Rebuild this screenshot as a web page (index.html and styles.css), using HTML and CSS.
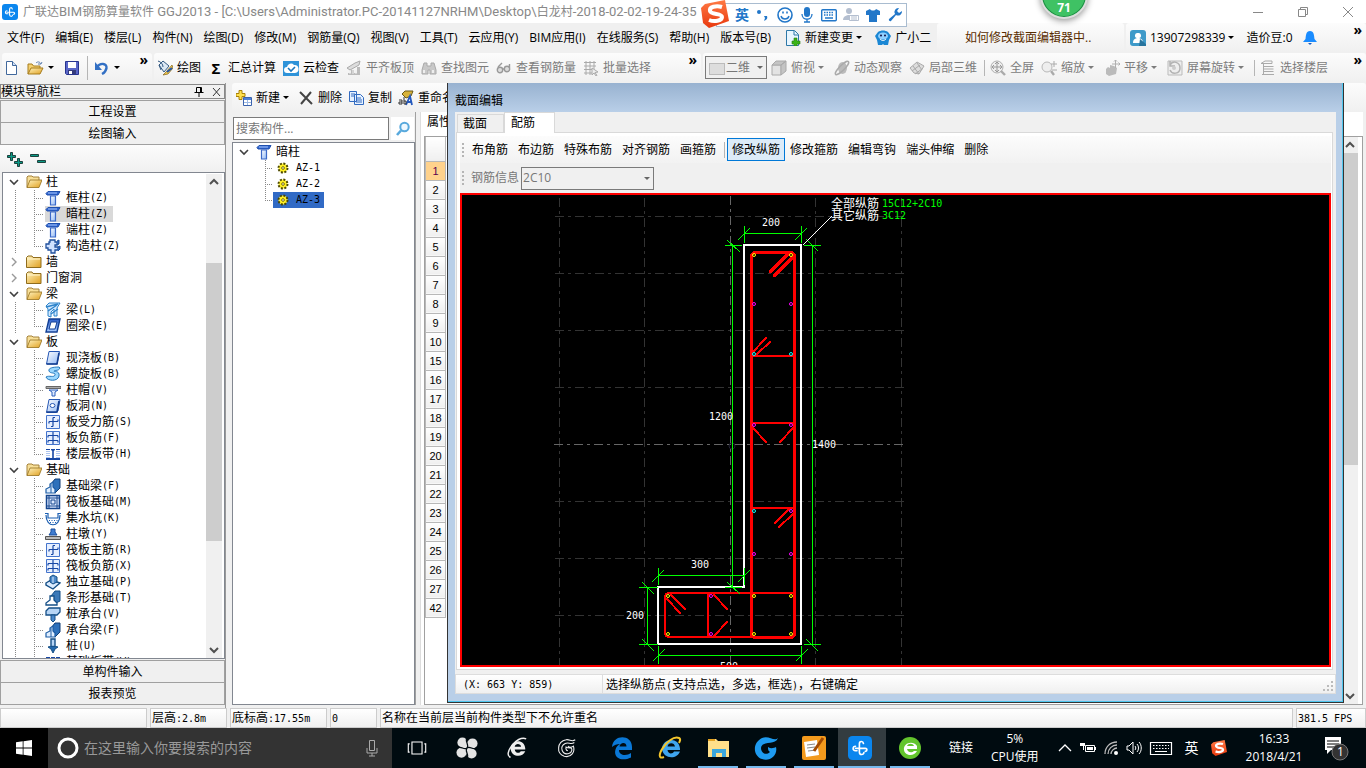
FILE: index.html
```html
<!DOCTYPE html>
<html lang="zh-CN">
<head>
<meta charset="utf-8">
<title>广联达BIM钢筋算量软件 GGJ2013</title>
<link rel="stylesheet" href="styles.css">
</head>
<body>
<svg class="defs" aria-hidden="true">
<defs>
<linearGradient id="gy" x1="0" y1="0" x2="1" y2="1"><stop offset="0" stop-color="#fff3bf"/><stop offset="1" stop-color="#e0a020"/></linearGradient>
<linearGradient id="gb" x1="0" y1="0" x2="1" y2="1"><stop offset="0" stop-color="#fff"/><stop offset="1" stop-color="#8fb8f5"/></linearGradient>
<linearGradient id="gd" x1="0" y1="0" x2="0" y2="1"><stop offset="0" stop-color="#2a5cc8"/><stop offset="1" stop-color="#a9ccff"/></linearGradient>
<linearGradient id="gs" x1="0" y1="0" x2="0" y2="1"><stop offset="0" stop-color="#ff7a45"/><stop offset="1" stop-color="#e8380d"/></linearGradient>
<symbol id="app" viewBox="0 0 16 16"><rect width="16" height="16" rx="3" fill="#0a86ee"/><path d="M10.300 5C10 3.200 7.600 3.200 7.600 5.200V10.800C7.600 12.800 10.400 12.800 10.600 11M5 8.200H11.500C13 8.200 13 10.200 11.500 10.200M5 6.800C3 6.800 2.800 9.800 5 9.800H6" fill="none" stroke="#fff" stroke-width="1.100" stroke-linecap="round"/></symbol>
<symbol id="newdoc" viewBox="0 0 16 16"><path d="M2.500 1.500h6l4 4v9h-10z" fill="#fff" stroke="#41689c"/><path d="M8.500 1.500v4h4" fill="#cfe0f7" stroke="#41689c"/></symbol>
<symbol id="open" viewBox="0 0 18 16"><path d="M1 14V4h4l1.500 2H13v2" fill="#f4d070" stroke="#a67c1d"/><path d="M1 14 4 8h12l-3 6z" fill="url(#gy)" stroke="#a67c1d"/><path d="M9 3c2-2 4-1 5 1l1-2M14 4h-3" fill="none" stroke="#5c7fb0"/></symbol>
<symbol id="save" viewBox="0 0 16 16"><path d="M1.500 1.500h13v13h-12l-1-1z" fill="#5a66c8" stroke="#27348f"/><path d="M4 2h8v6H4z" fill="#fff"/><path d="M4 10h8v4H4z" fill="#353c7c"/><path d="M5 11h3v3H5z" fill="#fff"/></symbol>
<symbol id="undo" viewBox="0 0 16 16"><path d="M3 7c3-4.500 10-4 9.500 1C12 11 10 13 8 14" fill="none" stroke="#3370c4" stroke-width="2.400"/><path d="M1 2v8h7z" fill="#3370c4"/></symbol>
<symbol id="paint" viewBox="0 0 16 16"><path d="M2 5 6 1l6 5-5 6z" fill="#dde9f5" stroke="#345a82"/><path d="M1 1c3 1 5 3 5 6M2 5l2 5" fill="none" stroke="#345a82"/><path d="M15 5 9 12l-3 3 5-1 5-6z" fill="#f3c94b" stroke="#7f611b" stroke-width=".7"/><path d="m10 12 5-4" stroke="#2757a5" stroke-width="2"/></symbol>
<symbol id="cloudchk" viewBox="0 0 16 16"><rect y="1" width="16" height="15" fill="#2e93d9"/><path d="M4 13a3 3 0 0 1 0-6 4 4 0 0 1 7-2 3.500 3.500 0 0 1 1 8z" fill="#fff"/><path d="m5 8 3 3 4-4" fill="none" stroke="#1b77bd" stroke-width="1.600"/></symbol>
<symbol id="align" viewBox="0 0 16 16"><path d="M1 8 9 3l5-2-1 4-9 5z" fill="#ddd" stroke="#aaa"/><path d="M2 13h3v-3h3v3h3V7h3v8H2z" fill="#bbb"/><path d="M4 11v3M7 10v4M10 10v4" stroke="#eee"/></symbol>
<symbol id="binoc" viewBox="0 0 16 16"><path d="M3 3h3v3h4V3h3l2 7v4H9v-4H7v4H1v-4z" fill="#c8c8c8" stroke="#aaa"/><path d="M3 10v3M12 10v3" stroke="#eee" stroke-width="2"/></symbol>
<symbol id="glasses" viewBox="0 0 16 16"><g fill="#ddd" stroke="#999" stroke-width="1.400"><circle cx="4" cy="10" r="2.700"/><circle cx="11" cy="9" r="2.700"/><path d="M6.500 9h2M2 7l4-4M13.500 8V4" fill="none"/></g></symbol>
<symbol id="batch" viewBox="0 0 16 16"><path d="M1 2.500h12M1 6h12M1 9.500h8M1 13h8M3 1v14M7 1v14M11 1v8" stroke="#aaa" fill="none"/><path d="m9 8 6 4-3 .5 2 3-1 .5-2-3-2 2z" fill="#eee" stroke="#aaa"/></symbol>
<symbol id="cube" viewBox="0 0 16 16"><path d="M1 5h9v10H1z" fill="#e3e3e3" stroke="#aaa"/><path d="m1 5 4-4h10l-5 4zM10 15V5l5-4v10z" fill="#c4c4c4" stroke="#aaa"/></symbol>
<symbol id="orbit" viewBox="0 0 16 16"><ellipse cx="8.500" cy="8" rx="4.500" ry="6" fill="#bbb"/><ellipse cx="8" cy="8" rx="9" ry="2.500" transform="rotate(-45 8 8)" fill="none" stroke="#aaa" stroke-width="1.500"/></symbol>
<symbol id="loc3d" viewBox="0 0 16 16"><path d="m1 8 7-6 7 4-5 8-5-1z" fill="#ddd" stroke="#aaa"/><path d="m4 6 6 8M8 3l5 7M3 11l8-6M6 14l7-5" stroke="#aaa"/></symbol>
<symbol id="full" viewBox="0 0 16 16"><circle cx="7" cy="7" r="6" fill="#eee" stroke="#b0b0b0"/><path d="M7 2v10M2 7h10M5 4l2-2 2 2M5 10l2 2 2-2M4 5 2 7l2 2M10 5l2 2-2 2" fill="none" stroke="#999"/><path d="m11 11 4 4" stroke="#aaa" stroke-width="2.400"/></symbol>
<symbol id="zoomi" viewBox="0 0 16 16"><circle cx="6" cy="7" r="5" fill="#eee" stroke="#b8b8b8"/><path d="m10 11 3 4" stroke="#aaa" stroke-width="2.400"/><path d="M13 1v6M10 4h6M11 10h5" stroke="#aaa"/></symbol>
<symbol id="pan" viewBox="0 0 16 16"><path d="m2 9 2-2 2 1V5l4 1 3 2-1 6-7 2-3-2z" fill="#bbb"/><path d="M11.500 0v8M8 4h8M10 1.500 11.500 0 13 1.500M14.500 2.500 16 4l-1.500 1.500" stroke="#b0b0b0" fill="none"/></symbol>
<symbol id="rot" viewBox="0 0 16 16"><path d="M1 1h14v14H1z" fill="#eee" stroke="#bbb"/><path d="M3 5c3-5 10-3 10 3s-8 7-10 2M3 1v5h5" fill="none" stroke="#b3b3b3" stroke-width="1.500"/><circle cx="7" cy="8" r="2" fill="#ccc"/></symbol>
<symbol id="floors" viewBox="0 0 16 16"><path d="M1 3.500 5 1h7v2.500zM3.500 6.500h10M3.500 9h10M3.500 11.500h10M2 14.500h12M3.500 4v10" fill="none" stroke="#aaa"/></symbol>
<symbol id="addcmp" viewBox="0 0 16 16"><path d="M3 .5h3v3h3v3H6v3H3v-3H0v-3h3z" fill="#ffe04d" stroke="#a98208"/><path d="M7.500 7.500h8v8h-8z" fill="#fff" stroke="#3b63ad"/><path d="M8 8h7v2H8z" fill="#4d80d8"/><path d="M8 12.500h7M11.500 10v5" stroke="#9cb9e6"/></symbol>
<symbol id="del" viewBox="0 0 16 16"><path d="m2 2 12 12M13 2 3 14" stroke="#444" stroke-width="2" fill="none"/></symbol>
<symbol id="copy" viewBox="0 0 16 16"><path d="M1.500 1.500h7v10h-7zM6.500 4.500h6l3 3v7h-9z" fill="#e6f1ff" stroke="#326bc0"/><path d="M3 4h4M3 6h3M8 8h5M8 10h6M8 12h6" stroke="#326bc0"/></symbol>
<symbol id="ren" viewBox="0 0 16 16"><path d="M4 4 7 1h8l-2 5-5 2z" fill="#d8b33a" stroke="#6b5a18"/><path d="m8 15 4-9 2 9M9 12h4" stroke="#2559bd" stroke-width="1.800" fill="none"/><path d="M1 10h3v4H1v-2h3M6 7v7h2v-3H6" stroke="#333" fill="none"/></symbol>
<symbol id="srch" viewBox="0 0 16 16"><circle cx="9.500" cy="6" r="4.200" fill="#eef8ff" stroke="#58a9dd" stroke-width="2"/><path d="M6 9.500 2 14" stroke="#58a9dd" stroke-width="2.600"/></symbol>
<symbol id="gear" viewBox="0 0 12 12"><circle cx="6" cy="6" r="4.500" fill="#fff12e" stroke="#4c4800" stroke-width="2" stroke-dasharray="2 1.500"/><circle cx="6" cy="6" r="3" fill="#ffee20"/><path d="M4 6h4M6 4v4" stroke="#4c4800"/><circle cx="6" cy="6" r=".8" fill="#fff"/></symbol>
<symbol id="fopen" viewBox="0 0 16 16"><path d="M1 13.500V3l1-1h4l1 1h6v4" fill="#f7df98" stroke="#a5823b"/><path d="M1 13.500 4 6h12l-3 7.500z" fill="url(#gy)" stroke="#96701c" stroke-width=".8"/></symbol>
<symbol id="fclose" viewBox="0 0 16 16"><path d="M.5 3.500 2 2h4l1 1.500h8v10H.5z" fill="url(#gy)" stroke="#8f6c1d"/><path d="M1 5h13" stroke="#fff6d0"/></symbol>
<symbol id="col" viewBox="0 0 16 16"><path d="M1 3.500 3 1.500h12L13 5H2z" fill="#2e63cc" stroke="#1e4fae"/><path d="M3 3h9" stroke="#a8c8ff"/><path d="M5.500 6h5v9h-5z" fill="url(#gb)" stroke="#3b69c8" stroke-width="1.200"/></symbol>
<symbol id="gz" viewBox="0 0 16 16"><path d="M5 2h5v2h2v3h-2v2h3v3h-3v3H6v-3H3v-2H1V6h3V4h1z" fill="#cfe1ff" stroke="#1f4f9c" stroke-width="1.300"/><path d="m12 3 2-1v4l-2 1M13 9l2-1v3l-2 2" fill="#2e66bd" stroke="#1f4f9c"/></symbol>
<symbol id="beam" viewBox="0 0 16 16"><path d="m1 4 3-3h11l-3 5v8H9V7l-3 3v5l-3-1V7z" fill="#cfe8ff" stroke="#2d83ca"/><path d="m1 5 12-3M3 9l9-6M6 12l7-5" fill="none" stroke="#2d83ca" stroke-width="1.300"/></symbol>
<symbol id="ring" viewBox="0 0 16 16"><path d="M4 1h11l-3 13H1z" fill="url(#gd)" stroke="#123f94" stroke-width="1.400"/><path d="M6 4h6l-2 7H4z" fill="#fff" stroke="#123f94"/></symbol>
<symbol id="slab" viewBox="0 0 16 16"><path d="M4 1.500h10.500L12 14H1.500z" fill="url(#gb)" stroke="#2556b3"/><path d="M1.500 14H12l2-11" fill="none" stroke="#153f91" stroke-width="1.600"/></symbol>
<symbol id="spiral" viewBox="0 0 16 16"><path d="M14 1C8 1 3 2 4 5s7 1 6 4-6 0-9 2c1 4 12 5 13-1S8 6 9 5s5 0 6-3z" fill="#9bd8ff" stroke="#2679bd"/></symbol>
<symbol id="cap" viewBox="0 0 16 16"><path d="M1 4.500h15v2H1z" fill="#aaa" stroke="#666"/><path d="M4 8h9l-3 2v4H7v-4z" fill="#ddeaff" stroke="#2a5ebc"/></symbol>
<symbol id="hole" viewBox="0 0 16 16"><path d="M4 1.500h11L13 13l-2 1.500H1.500z" fill="url(#gb)" stroke="#2556b3"/><path d="M1.500 14H12l2-11" fill="none" stroke="#153f91" stroke-width="1.600"/><ellipse cx="7.500" cy="7.500" rx="2.500" ry="2" fill="#fff" stroke="#2556b3"/></symbol>
<symbol id="rb1" viewBox="0 0 16 16"><path d="M1.500 1.500h13v13h-13z" fill="#e6efff" stroke="#4474cc"/><path d="M8 12.500V3.500M4 7.500h9M8 3.500h2M8 12.500H6M4 7.500v2M13 7.500v-2" fill="none" stroke="#1747a5" stroke-width="1.200"/></symbol>
<symbol id="rb2" viewBox="0 0 16 16"><path d="M1.500 1.500h13v13h-13z" fill="#e6efff" stroke="#4474cc"/><path d="M8 2v12M3 5.500h10M3 10.500h10M3 5.500v2M13 5.500v2M3 10.500v2M13 10.500v2" fill="none" stroke="#1747a5" stroke-width="1.200"/></symbol>
<symbol id="strip" viewBox="0 0 16 16"><path d="M1 13h14" stroke="#1747a5" stroke-width="2"/><path d="M1 3.500h14" stroke="#1747a5" stroke-dasharray="4 1"/><path d="M6.500 4h3M8 3v10" stroke="#1747a5" stroke-width="1.600"/><path d="M4 5v7M12 5v7M2 5v7M14 5v7" stroke="#5d8be0" stroke-dasharray="1 1"/></symbol>
<symbol id="fb" viewBox="0 0 16 16"><path d="m6 6 4-5h5v9l-5 5z" fill="#2e71bb" stroke="#123f76"/><path d="M1 15v-4l4-2V6l3-2v5l2 2v4z" fill="#e1efff" stroke="#1d5da5" stroke-width="1.200"/><path d="M6 6v9" stroke="#1d5da5"/></symbol>
<symbol id="raft" viewBox="0 0 16 16"><path d="M1.500 1.500h13v13h-13z" fill="#dce9ff" stroke="#16468e" stroke-width="1.500"/><path d="M4 1v14M12 1v14M1 4h14M1 12h14M6 6h4v4H6z" fill="none" stroke="#16468e"/></symbol>
<symbol id="pit" viewBox="0 0 16 16"><path d="M0 3.500h3V8h10V3.500h3M1 5c0 13 14 13 14 0" fill="none" stroke="#1b5eb1" stroke-width="1.200"/><path d="M4 10.500h9M5 12.500h6" stroke="#1b5eb1" stroke-dasharray="1 1.500"/></symbol>
<symbol id="pier" viewBox="0 0 16 16"><path d="M4 9 6 6V3h4v3l2 3z" fill="#3f7dd1" stroke="#1b4f9c"/><path d="M.5 10.500h15v3H.5z" fill="#bbb" stroke="#555"/></symbol>
<symbol id="ind" viewBox="0 0 16 16"><path d="m1 9 5-3 9 3-7 6-7-4z" fill="#dcecff" stroke="#154f87" stroke-width="1.400"/><path d="M5 8V3l3-2 4 2v5l-4 2z" fill="#4d8acb" stroke="#154f87"/><path d="M8 3v6" stroke="#dcecff"/></symbol>
<symbol id="stp" viewBox="0 0 16 16"><path d="m6 6 4-5h5v10l-4 2" fill="#3b79b8" stroke="#154f87"/><path d="M1 15v-2l4-3V6h4v4l3 3v2z" fill="#fff" stroke="#154f87" stroke-width="1.300"/></symbol>
<symbol id="pcap" viewBox="0 0 16 16"><path d="m1 5 3-3h11v4l-3 3H1z" fill="#b7d5f5" stroke="#154f87" stroke-width="1.300"/><path d="M6 9h4v5l-2 2-2-2z" fill="#4d8acb" stroke="#154f87"/></symbol>
<symbol id="pile" viewBox="0 0 16 16"><path d="M6 1h4v8H6z" fill="#b7d5f5" stroke="#154f87" stroke-width="1.400"/><path d="M3 9c3-1 7-1 10 0l-3 2-2 4-2-4z" fill="#2268ad" stroke="#154f87"/></symbol>
<symbol id="chev" viewBox="0 0 16 16"><path d="m4 6 4 4 4-4" fill="none" stroke="#404040" stroke-width="1.600"/></symbol>
<symbol id="chevr" viewBox="0 0 16 16"><path d="m6 4 4 4-4 4" fill="none" stroke="#999" stroke-width="1.400"/></symbol>
<symbol id="chevu" viewBox="0 0 16 16"><path d="m4 10 4-4 4 4" fill="none" stroke="#505050" stroke-width="2"/></symbol>
<symbol id="sg" viewBox="0 0 28 28"><path d="M4 4 24 0l4 21-20 7-6-5L0 8z" fill="url(#gs)"/><path d="M21 7c-6-2-13 0-12 4s12 2 12 6-8 5-13 3" fill="none" stroke="#fff" stroke-width="4"/></symbol>
<symbol id="shirt" viewBox="0 0 16 16"><path d="m5 2-4 2v4h3v7h8V8h3V4l-4-2c-1 2-5 2-6 0z" fill="#2277c9"/></symbol>
<symbol id="wrench" viewBox="0 0 16 16"><path d="M15 4a4 4 0 0 1-6 4l-5 6a1.500 1.500 0 0 1-2-2l6-5a4 4 0 0 1 4-6l-2 3 2 2z" fill="#2277c9"/></symbol>
<symbol id="smile" viewBox="0 0 16 16"><circle cx="8" cy="8" r="7" fill="none" stroke="#2277c9" stroke-width="1.600"/><path d="M4 9c1 4 7 4 8 0" fill="none" stroke="#2277c9" stroke-width="1.400"/><path d="M6 4.500v2M10 4.500v2" stroke="#2277c9" stroke-width="1.600"/></symbol>
<symbol id="mic" viewBox="0 0 16 16"><rect x="5" width="6" height="10" rx="3" fill="#2277c9"/><path d="M3 7c0 7 10 7 10 0M8 12v3M5 15h6" fill="none" stroke="#2277c9" stroke-width="1.300"/></symbol>
<symbol id="kb" viewBox="0 0 16 16"><rect x=".7" y="2.700" width="14.600" height="11" rx="1" fill="none" stroke="#2277c9" stroke-width="1.400"/><path d="M3 5.500h10M3 8h10" stroke="#2277c9" stroke-width="1.500" stroke-dasharray="1.500 1"/><path d="M4 11h8" stroke="#2277c9" stroke-width="1.500"/></symbol>
<symbol id="hand" viewBox="0 0 16 16"><circle cx="6" cy="4" r="3" fill="#b4bfd0"/><path d="M0 13c0-6 10-6 10-3v3z" fill="#b4bfd0"/><path d="M6.500 8.500h9v5h-9z" fill="#fff" stroke="#b4bfd0"/><path d="M8 10h6M8 12h6" stroke="#b4bfd0"/></symbol>
<symbol id="gplus" viewBox="0 0 16 16"><path d="M1.500.5h8l4 4v11h-12z" fill="#e9f6ff" stroke="#2e78a8"/><path d="M9 1v4h4" fill="none" stroke="#2e78a8"/><path d="M9 8h3v3h3v3h-3v2H9v-2H7v-3h2z" fill="#39b317" stroke="#287d10" stroke-width=".6"/></symbol>
<symbol id="xiaoer" viewBox="0 0 16 16"><path d="M3 2c3-2 7-2 10 0l3 4-2 4-1 5H9l-1-1-1 1H3l-1-5-2-4z" fill="#1b87d4"/><ellipse cx="8" cy="6" rx="5" ry="3.500" fill="#8fd0ff"/><circle cx="6" cy="5.500" r="1" fill="#114"/><circle cx="10" cy="5.500" r="1" fill="#114"/><path d="M5 9c2 2 4 2 6 0" stroke="#fff" fill="none"/></symbol>
<symbol id="user" viewBox="0 0 16 16"><rect width="16" height="16" rx="3" fill="#3e9ac9"/><path d="M8 3a2.500 2.500 0 0 1 1 5c3 1 4 2 4 5H3c0-3 1-4 4-5a2.500 2.500 0 0 1 1-5z" fill="#fff"/><path d="m10 9 6 5v2H9z" fill="#28759e"/></symbol>
<symbol id="bell" viewBox="0 0 14 16"><path d="M7 1c4 0 4 4 4.500 8L14 12H0l2.500-3C3 5 3 1 7 1z" fill="#1a8cff"/><path d="M5 13h4l-2 2z" fill="#1a5cc0"/></symbol>
</defs>
</svg>

<div class="app">
  <header class="titlebar">
    <svg class="ic"><use href="#app"/></svg>
    <h1><span>广联达</span>BIM<span>钢筋算量软件</span> GGJ2013 - [C:\Users\Administrator.PC-20141127NRHM\Desktop\<span>白龙村</span>-2018-02-02-19-24-35</h1>
    <div class="winbtns">
      <button aria-label="最小化"><svg viewBox="0 0 12 12"><path d="M1 6.500h10" stroke="#888"/></svg></button>
      <button aria-label="还原"><svg viewBox="0 0 12 12"><path d="M1.500 3.500h7v7h-7zM3.500 3.500v-2h7v7h-2" fill="none" stroke="#888"/></svg></button>
      <button aria-label="关闭"><svg viewBox="0 0 12 12"><path d="m1 1 10 10M11 1 1 11" stroke="#888"/></svg></button>
    </div>
  </header>
  <div class="ime">
    <svg class="sogou"><use href="#sg"/></svg>
    <b>英</b>
    <svg class="ic" viewBox="0 0 16 16"><circle cx="4" cy="5" r="2" fill="#2277c9"/><path d="M9 9h3c1 3-1 4-3 5l1-3z" fill="#2277c9"/></svg>
    <svg class="ic"><use href="#smile"/></svg><svg class="ic"><use href="#mic"/></svg><svg class="ic"><use href="#kb"/></svg><svg class="ic"><use href="#hand"/></svg><svg class="ic"><use href="#shirt"/></svg><svg class="ic"><use href="#wrench"/></svg>
  </div>
  <div class="ball">71</div>

  <div class="menurow">
    <nav class="menu">
      <button>文件(F)</button><button>编辑(E)</button><button>楼层(L)</button><button>构件(N)</button><button>绘图(D)</button><button>修改(M)</button><button>钢筋量(Q)</button><button>视图(V)</button><button>工具(T)</button><button>云应用(Y)</button><button>BIM应用(I)</button><button>在线服务(S)</button><button>帮助(H)</button><button>版本号(B)</button>
      <button class="tb"><svg class="ic"><use href="#gplus"/></svg>新建变更<i class="arr"></i></button>
      <button class="tb near"><svg class="ic"><use href="#xiaoer"/></svg>广小二</button>
    </nav>
    <div class="band tip"><a href="#">如何修改截面编辑器中..</a></div>
    <div class="band account">
      <button class="tb"><svg class="ic"><use href="#user"/></svg>13907298339<i class="arr"></i></button>
      <span>造价豆:0</span>
      <svg class="ic bell"><use href="#bell"/></svg>
      <span class="more">»</span>
    </div>
  </div>

  <div class="toolrow">
    <div class="band files">
      <button aria-label="新建"><svg class="ic"><use href="#newdoc"/></svg></button>
      <button aria-label="打开"><svg class="ic wide"><use href="#open"/></svg><i class="arr"></i></button>
      <button aria-label="保存"><svg class="ic"><use href="#save"/></svg></button>
      <i class="sep"></i>
      <button aria-label="撤销"><svg class="ic wide"><use href="#undo"/></svg><i class="arr"></i></button>
      <span class="more">»</span>
    </div>
    <div class="band draw">
      <button class="tb"><svg class="ic"><use href="#paint"/></svg>绘图</button>
      <button class="tb"><span class="sigma">Σ</span>汇总计算</button>
      <button class="tb"><svg class="ic"><use href="#cloudchk"/></svg>云检查</button>
      <button class="tb off"><svg class="ic"><use href="#align"/></svg>平齐板顶</button>
      <button class="tb off"><svg class="ic"><use href="#binoc"/></svg>查找图元</button>
      <button class="tb off"><svg class="ic"><use href="#glasses"/></svg>查看钢筋量</button>
      <button class="tb off"><svg class="ic"><use href="#batch"/></svg>批量选择</button>
      <span class="more">»</span>
    </div>
    <div class="band view">
      <div class="viewsel"><select aria-label="视图"><option>二维</option></select></div>
      <button class="tb off"><svg class="ic"><use href="#cube"/></svg>俯视<i class="arr"></i></button>
      <button class="tb off"><svg class="ic"><use href="#orbit"/></svg>动态观察</button>
      <button class="tb off"><svg class="ic"><use href="#loc3d"/></svg>局部三维</button>
      <i class="sep"></i>
      <button class="tb off"><svg class="ic"><use href="#full"/></svg>全屏</button>
      <button class="tb off"><svg class="ic"><use href="#zoomi"/></svg>缩放<i class="arr"></i></button>
      <button class="tb off"><svg class="ic"><use href="#pan"/></svg>平移<i class="arr"></i></button>
      <button class="tb off"><svg class="ic"><use href="#rot"/></svg>屏幕旋转<i class="arr"></i></button>
      <i class="sep"></i>
      <button class="tb off"><svg class="ic"><use href="#floors"/></svg>选择楼层</button>
      <span class="more">»</span>
    </div>
  </div>

  <main class="work">
    <aside class="nav">
      <div class="navhead"><span>模块导航栏</span>
        <svg viewBox="0 0 28 12"><path d="M3.500 1.500h5v5h-5zM1.500 6.500h9M6 7v4M7.500 2v4" fill="none" stroke="#000"/><path d="m20 2 7 8M27 2l-7 8" stroke="#333"/></svg>
      </div>
      <button class="navbtn">工程设置</button>
      <button class="navbtn">绘图输入</button>
      <div class="expand">
        <svg viewBox="0 0 40 16"><g fill="#0a9a86" stroke="#02201c" stroke-width=".8"><path d="M3.500.5h2v3h3v2h-3v3h-2v-3h-3v-2h3zM10.500 6.500h2v3h3v2h-3v3h-2v-3h-3v-2h3zM23.500 2.500h8v2h-8zM30.500 8.500h8v2h-8z"/></g></svg>
      </div>
      <div class="treebox">
        <ul class="tree">
          <li><div class="node"><svg class="ic"><use href="#chev"/></svg><svg class="ic"><use href="#fopen"/></svg>柱</div>
            <ul>
              <li><svg class="ic"><use href="#col"/></svg><span>框柱<tt>(Z)</tt></span></li>
              <li><span class="cur"><svg class="ic"><use href="#col"/></svg><span>暗柱<tt>(Z)</tt></span></span></li>
              <li><svg class="ic"><use href="#col"/></svg><span>端柱<tt>(Z)</tt></span></li>
              <li><svg class="ic"><use href="#gz"/></svg><span>构造柱<tt>(Z)</tt></span></li>
            </ul></li>
          <li><div class="node"><svg class="ic"><use href="#chevr"/></svg><svg class="ic"><use href="#fclose"/></svg>墙</div></li>
          <li><div class="node"><svg class="ic"><use href="#chevr"/></svg><svg class="ic"><use href="#fclose"/></svg>门窗洞</div></li>
          <li><div class="node"><svg class="ic"><use href="#chev"/></svg><svg class="ic"><use href="#fopen"/></svg>梁</div>
            <ul>
              <li><svg class="ic"><use href="#beam"/></svg><span>梁<tt>(L)</tt></span></li>
              <li><svg class="ic"><use href="#ring"/></svg><span>圈梁<tt>(E)</tt></span></li>
            </ul></li>
          <li><div class="node"><svg class="ic"><use href="#chev"/></svg><svg class="ic"><use href="#fopen"/></svg>板</div>
            <ul>
              <li><svg class="ic"><use href="#slab"/></svg><span>现浇板<tt>(B)</tt></span></li>
              <li><svg class="ic"><use href="#spiral"/></svg><span>螺旋板<tt>(B)</tt></span></li>
              <li><svg class="ic"><use href="#cap"/></svg><span>柱帽<tt>(V)</tt></span></li>
              <li><svg class="ic"><use href="#hole"/></svg><span>板洞<tt>(N)</tt></span></li>
              <li><svg class="ic"><use href="#rb1"/></svg><span>板受力筋<tt>(S)</tt></span></li>
              <li><svg class="ic"><use href="#rb2"/></svg><span>板负筋<tt>(F)</tt></span></li>
              <li><svg class="ic"><use href="#strip"/></svg><span>楼层板带<tt>(H)</tt></span></li>
            </ul></li>
          <li><div class="node"><svg class="ic"><use href="#chev"/></svg><svg class="ic"><use href="#fopen"/></svg>基础</div>
            <ul>
              <li><svg class="ic"><use href="#fb"/></svg><span>基础梁<tt>(F)</tt></span></li>
              <li><svg class="ic"><use href="#raft"/></svg><span>筏板基础<tt>(M)</tt></span></li>
              <li><svg class="ic"><use href="#pit"/></svg><span>集水坑<tt>(K)</tt></span></li>
              <li><svg class="ic"><use href="#pier"/></svg><span>柱墩<tt>(Y)</tt></span></li>
              <li><svg class="ic"><use href="#rb1"/></svg><span>筏板主筋<tt>(R)</tt></span></li>
              <li><svg class="ic"><use href="#rb2"/></svg><span>筏板负筋<tt>(X)</tt></span></li>
              <li><svg class="ic"><use href="#ind"/></svg><span>独立基础<tt>(P)</tt></span></li>
              <li><svg class="ic"><use href="#stp"/></svg><span>条形基础<tt>(T)</tt></span></li>
              <li><svg class="ic"><use href="#pcap"/></svg><span>桩承台<tt>(V)</tt></span></li>
              <li><svg class="ic"><use href="#fb"/></svg><span>承台梁<tt>(F)</tt></span></li>
              <li><svg class="ic"><use href="#pile"/></svg><span>桩<tt>(U)</tt></span></li>
              <li><svg class="ic"><use href="#strip"/></svg><span>基础板带<tt>(W)</tt></span></li>
            </ul></li>
        </ul>
        <div class="sbar"><svg class="ic"><use href="#chevu"/></svg><i class="gap"></i><i class="thumb"></i><i class="rest"></i><svg class="ic flip"><use href="#chevu"/></svg></div>
      </div>
      <button class="navbtn">单构件输入</button>
      <button class="navbtn">报表预览</button>
    </aside>

    <section class="right">
      <div class="band cmpbar">
        <button class="tb"><svg class="ic"><use href="#addcmp"/></svg>新建<i class="arr"></i></button>
        <button class="tb"><svg class="ic"><use href="#del"/></svg>删除</button>
        <button class="tb"><svg class="ic"><use href="#copy"/></svg>复制</button>
        <button class="tb"><svg class="ic"><use href="#ren"/></svg>重命名</button>
      </div>
      <div class="cols">
        <div class="cmp">
          <div class="find"><input type="text" placeholder="搜索构件..." aria-label="搜索构件"><button aria-label="搜索"><svg class="ic"><use href="#srch"/></svg></button></div>
          <div class="cmptree">
            <div class="node"><svg class="ic"><use href="#chev"/></svg><svg class="ic"><use href="#col"/></svg>暗柱</div>
            <ul>
              <li><span><svg class="gear"><use href="#gear"/></svg><tt>AZ-1</tt></span></li>
              <li><span><svg class="gear"><use href="#gear"/></svg><tt>AZ-2</tt></span></li>
              <li><span class="sel"><svg class="gear"><use href="#gear"/></svg><tt>AZ-3</tt></span></li>
            </ul>
          </div>
        </div>
        <div class="props">
          <div class="proptab">属性编辑</div>
          <div class="propbody">
            <table>
              <thead><tr><th></th></tr></thead>
              <tbody>
              <tr class="on"><td>1</td></tr><tr><td>2</td></tr><tr><td>3</td></tr><tr><td>4</td></tr><tr><td>5</td></tr><tr><td>6</td></tr><tr><td>7</td></tr><tr><td>8</td></tr><tr><td>9</td></tr><tr><td>10</td></tr><tr><td>15</td></tr><tr><td>16</td></tr><tr><td>17</td></tr><tr><td>18</td></tr><tr><td>19</td></tr><tr><td>20</td></tr><tr><td>21</td></tr><tr><td>22</td></tr><tr><td>23</td></tr><tr><td>24</td></tr><tr><td>25</td></tr><tr><td>26</td></tr><tr><td>27</td></tr><tr><td>42</td></tr>
              </tbody>
            </table>
            <div class="sbar big"><svg class="ic"><use href="#chevu"/></svg><i class="thumb"></i><i class="rest"></i><svg class="ic flip"><use href="#chevu"/></svg></div>
          </div>
        </div>
      </div>
    </section>

    <section class="dialog" role="dialog" aria-label="截面编辑">
      <h2>截面编辑</h2>
      <div class="dbody">
        <div class="tabs"><button>截面</button><button class="act">配筋</button></div>
        <div class="page">
          <div class="strip"><i class="grip"></i>
            <button>布角筋</button><button>布边筋</button><button>特殊布筋</button><button>对齐钢筋</button><button>画箍筋</button><i class="sep"></i><button class="on">修改纵筋</button><button>修改箍筋</button><button>编辑弯钩</button><button>端头伸缩</button><button>删除</button>
          </div>
          <div class="strip second"><i class="grip"></i><label for="bar">钢筋信息</label><div class="barsel"><select id="bar"><option>2C10</option></select></div></div>
          <div class="canvas">
            <svg>
              <g transform="translate(-462 -195)" fill="none">
                <g stroke="#333" stroke-dasharray="9 4 3 4">
                  <path d="M559.500 198V666M644.500 198V666M815.500 198V666M901.500 198V666M555 216.500H906M555 273.500H906M555 330.500H906M555 387.500H906M555 501.500H906M555 558.500H906M555 615.500H906"/>
                  <path d="M730.500 196V666M554 444.500H906" stroke="#666"/>
                </g>
                <circle cx="732" cy="446" r="3" stroke="#223"/>
                <path d="M744 245H801V644H658V587H744Z" stroke="#fff" stroke-width="2"/>
                <g class="rebar" stroke="#f00" stroke-width="2" stroke-linecap="round">
                  <rect x="751.500" y="252.500" width="43" height="385" rx="4" stroke-width="3"/>
                  <rect x="665" y="593" width="130" height="44" rx="4"/>
                  <path d="M752 356H795M752 423H795M752 508H795M711 593Q708 593 708 597V633Q708 637 711 637"/>
                  <path d="m789 253-19 19M793 257l-19 19" stroke-width="3"/>
                  <path d="m752 353 14-15M757 354l13-12M753 428l13 14M793 428l-13 14M789 509l-14 14M793 514l-14 13M667 599l13 14M671 595l14 14M714 595l13 14M714 636l13-14"/>
                </g>
                <g stroke="#ff0"><circle cx="754" cy="255" r="1.500"/><circle cx="791" cy="255" r="1.500"/><circle cx="754" cy="596" r="1.500"/><circle cx="791" cy="596" r="1.500"/><circle cx="754" cy="634" r="1.500"/><circle cx="791" cy="634" r="1.500"/><circle cx="668" cy="596" r="1.500"/><circle cx="668" cy="634" r="1.500"/></g>
                <g stroke="#f0f"><circle cx="754" cy="304" r="1.500"/><circle cx="791" cy="304" r="1.500"/><circle cx="754" cy="425" r="1.500"/><circle cx="791" cy="425" r="1.500"/><circle cx="791" cy="511" r="1.500"/><circle cx="754" cy="554" r="1.500"/><circle cx="791" cy="554" r="1.500"/><circle cx="711" cy="596" r="1.500"/><circle cx="711" cy="634" r="1.500"/></g>
                <g stroke="#0ff"><circle cx="754" cy="354" r="1.500"/><circle cx="791" cy="354" r="1.500"/><circle cx="754" cy="511" r="1.500"/></g>
                <path class="dim" stroke="#0f0" d="M744.500 233.500H801.500M744.500 226V243M801.500 226V243M738 240l12-12M795 240l12-12M732.500 245V587M725 245.500H742M727 240l13 12M725 587.500H742M727 582l13 12M812.500 245V644M804 245.500H821M806 239l12 12M804 644.500H821M806 639l12 12M658.500 575.500H744.500M658.500 568V585M744.500 568V585M652 582l12-12M738 582l12-12M647.500 587V644M639 587.500H658M642 582l12 12M639 644.500H658M642 639l12 12M658.500 655.500H801.500M658.500 646V664M801.500 646V664M653 661l12-12M796 661l12-12"/>
                <path class="dim" d="M803 245 832 216" stroke="#fff"/>
                <g class="cad" fill="#fff">
                  <text class="zh" x="831" y="208">全部纵筋</text><text class="zh" x="831" y="220">其它纵筋</text>
                  <text x="882" y="207" fill="#0f0">15C12+2C10</text><text x="882" y="219" fill="#0f0">3C12</text>
                  <text x="762" y="226">200</text><text x="709" y="420">1200</text><text x="812" y="448">1400</text><text x="691" y="568">300</text><text x="626" y="619">200</text><text x="720" y="670">500</text>
                </g>
              </g>
            </svg>
          </div>
        </div>
        <div class="dstatus"><span class="xy"><tt>(X: 663 Y: 859)</tt></span><span class="msg">选择纵筋点<tt>(</tt>支持点选，多选，框选<tt>)</tt>，右键确定</span>
          <svg viewBox="0 0 12 12"><path d="M8 0h2v2H8zM8 4h2v2H8zM8 8h2v2H8zM4 4h2v2H4zM4 8h2v2H4zM0 8h2v2H0z" fill="#bbb"/></svg>
        </div>
      </div>
    </section>
  </main>

  <footer class="status">
    <span class="s1"></span><span class="s2">层高<tt>:2.8m</tt></span><span class="s3">底标高<tt>:17.55m</tt></span><span class="s4"><tt>0</tt></span><span class="s5">名称在当前层当前构件类型下不允许重名</span><span class="s6"><tt>381.5 FPS</tt></span>
  </footer>

  <div class="taskbar">
    <button class="start" aria-label="开始"><svg viewBox="0 0 16 16"><path d="M0 2.300 6.700 1.300V7.600H0zM7.500 1.200 16 0v7.600H7.500zM0 8.400h6.700v6.400L0 13.800zM7.500 8.400H16V16l-8.500-1.200z" fill="#fff"/></svg></button>
    <div class="cortana"><svg class="o" viewBox="0 0 22 22"><circle cx="11" cy="11" r="9" fill="none" stroke="#fff" stroke-width="3"/></svg><input type="text" placeholder="在这里输入你要搜索的内容" aria-label="搜索"><svg class="m" viewBox="0 0 12 18"><path d="M3.500 1.500h5v10h-5zM1 9v5h10V9M6 14v3M3 17h6" fill="none" stroke="#aaa"/></svg></div>
    <div class="quick">
      <button aria-label="任务视图"><svg viewBox="0 0 24 24"><path d="M6.500 5.500h11v13h-11zM4 7.500H2.500v9H4M20 7.500h1.500v9H20" fill="none" stroke="#fff" stroke-width="1.200"/></svg></button>
      <button aria-label="四叶"><svg viewBox="0 0 24 24"><g fill="#e4e4e4"><circle cx="7" cy="6" r="5.500"/><circle cx="18" cy="7" r="5.500"/><circle cx="6" cy="17" r="5.500"/><circle cx="17" cy="18" r="5.500"/><path d="M7 6h10v12H7z"/></g><path d="M2 12c3-3 7 3 10 0s7 3 10 0M12 1c-3 4 3 7 0 11s3 7 0 11" fill="none" stroke="#000b10" stroke-width="1.300"/></svg></button>
      <button aria-label="浏览器"><svg viewBox="0 0 24 24"><path d="M21 15.500C18 23 6 22 5 13 5 3 20 1 21 12.500V13.500H9.500C10 18 15 18 16 15.500zM9.500 10.500h7C16 6.500 10 6.500 9.500 10.500z" fill="#eee"/><path d="M5 22C-4 20 12-3 22 2" fill="none" stroke="#eee" stroke-width="1.600"/></svg></button>
      <button aria-label="广联达"><svg viewBox="0 0 24 24"><path d="M21 3C17 6 15 2 11 3 1 5 0 18 9 21c8 2 12-5 10-11-3 2-5 1-6 0M20 6c-4 3-6-1-10 1-7 4-3 13 4 11 4-1 4-6 2-6-3 0-4 0-5-1 0 0-1 4 2 4" fill="none" stroke="#eee" stroke-width="1.200"/></svg></button>
    </div>
    <div class="apps">
      <button aria-label="Edge"><svg viewBox="0 0 24 24"><path d="M2 11C3-2 22-2 22 11v3H9c0 6 8 6 12 3v4.500C12 26 3 22 5.500 13.500 6 11 8 9 10 8 7 8 4 9 2 11zM9.500 10.500h7C16.500 5.500 10 6 9.500 10.500z" fill="#0a78d6"/></svg></button>
      <button aria-label="IE"><svg viewBox="0 0 24 24"><path d="M22 15.500C19 24 5 23 4 13 4 2 21 0 22 12.500V14H9.500C10 18.500 15 18 16 15.500zM9.500 10.500h7.500C16.500 6 10 6 9.500 10.500z" fill="#3fa5ee"/><path d="M6 21C-6 26 10-2 21 2c2 1 1 3 0 5" fill="none" stroke="#f4c62c" stroke-width="2"/></svg></button>
      <button class="run" aria-label="资源管理器"><svg viewBox="0 0 24 24"><path d="M2 3h8l2 2h11v16H2z" fill="#ffe08a"/><path d="M2 3h7v2H2z" fill="#e5a423"/><path d="M6 13h14v8h-4v-4h-6v4H6z" fill="#3aa7dd"/></svg></button>
      <button class="run" aria-label="G"><svg viewBox="0 0 24 24"><path d="M24 2C20 6 15-1 8 2-2 7-1 20 8 23c8 3 16-4 14-12-2 1-5 2-8 0 0 2 0 4 2 5-4 4-9 1-9-4 1-8 14-2 17-10z" fill="#1e9bf0"/></svg></button>
      <button class="run" aria-label="便签"><svg viewBox="0 0 24 24"><rect x="0" y="0" width="24" height="24" rx="2" fill="#f39a1d"/><path d="m2 6 13-2 2 15-13 2z" fill="#fff"/><path d="M5 9l8-1M5 12l8-1M6 15l8-1" stroke="#888"/><path d="m21 2-9 13" stroke="#a34a00" stroke-width="3"/></svg></button>
      <button class="run cur" aria-label="GGJ"><svg viewBox="0 0 16 16"><use href="#app"/></svg></button>
      <button class="run" aria-label="360"><svg viewBox="0 0 24 24"><circle cx="12" cy="12" r="11" fill="#63c52d"/><path d="M19 15c-3 6-12 5-13-1C5 7 15 4 19 10v3H9c1 4 5 4 7 2zM9 10h7c-1-3-6-3-7 0z" fill="#fff"/></svg></button>
    </div>
    <div class="tray">
      <span class="link">链接</span>
      <span class="cpu">5%<br>CPU使用</span>
      <svg class="t16" viewBox="0 0 16 16"><path d="m2 11 6-6 6 6" fill="none" stroke="#fff" stroke-width="1.300"/></svg>
      <svg class="t16" viewBox="0 0 16 16"><path d="M5.500 5.500h9v6h-9z" fill="none" stroke="#fff"/><path d="M7 7h6v3H7zM15 7h1v3h-1zM0 3h5v3H4v4H3V6H0z" fill="#fff"/></svg>
      <svg class="t16" viewBox="0 0 16 16"><path d="M2 14C2 7 7 2 14 2M5 14c0-5 4-9 9-9M8 14c0-3 3-6 6-6" fill="none" stroke="#bbb" stroke-width="1.300"/><circle cx="13" cy="13" r="2" fill="#fff"/></svg>
      <svg class="t16" viewBox="0 0 16 16"><path d="M1 6h2l4-4v12l-4-4H1zM9 6c1 1 1 3 0 4M11 4c2 2 2 6 0 8M13 2c3 3 3 9 0 12" fill="none" stroke="#fff"/></svg>
      <svg class="t24" viewBox="0 0 24 16"><path d="M1.500 2.500h21v12h-21z" fill="none" stroke="#fff" stroke-width="1.200"/><path d="M4 5.500h16M4 8.500h16" stroke="#fff" stroke-dasharray="1.500 1.500"/><path d="M6 11.500h12" stroke="#fff"/></svg>
      <span class="ying">英</span>
      <svg class="t16" viewBox="0 0 28 28"><use href="#sg"/></svg>
      <span class="clock">16:33<br>2018/4/21</span>
      <button class="note" aria-label="通知"><svg viewBox="0 0 28 28"><path d="M3 3h16v13H9l-4 4v-4H3z" fill="#fff"/><path d="M5 7h12M5 10h12M5 13h8" stroke="#000"/><circle cx="18" cy="18" r="8" fill="#333" stroke="#777"/></svg><b>1</b></button>
    </div>
  </div>
</div>
</body>
</html>
```
FILE: styles.css
```css
* { box-sizing: border-box; }
body {
  margin: 0;
  font: 12px/16px "Open Sans", "Noto Sans CJK SC", sans-serif;
  color: #000;
  background: #f0f0f0;
}
button {
  font: inherit; color: inherit; background: none; border: 0; padding: 0;
  display: flex; align-items: center; white-space: nowrap;
}
select, input { font: inherit; border-radius: 0; }
ul { list-style: none; margin: 0; padding: 0; }
svg { display: block; flex: none; }
tt { font: 10px/16px "DejaVu Sans Mono", monospace; }
.defs { position: absolute; width: 0; height: 0; }
.ic { width: 16px; height: 16px; }
.wide { width: 18px; }

.app { position: relative; height: 100vh; display: flex; flex-direction: column; overflow: hidden; }

/* title bar */
.titlebar { flex: none; height: 23px; background: #fff; display: flex; align-items: center; padding: 0 12px 0 2px; gap: 5px; color: #888; }
.titlebar h1 { margin: 0; font: 13px/16px Roboto, "Noto Sans CJK SC", sans-serif; white-space: nowrap; flex: 1; }
.titlebar h1 span { font-size: 12px; }
.winbtns { display: flex; gap: 33px; }
.winbtns svg { width: 12px; height: 12px; }
.ime {
  position: absolute; left: 716px; top: 3px; height: 24px; display: flex; align-items: center; gap: 6px;
  padding: 0 3px 0 18px; background: #fff; border: 1px solid #a9bcd0; color: #2277c9; z-index: 3;
}
.ime b { font-size: 14px; }
.sogou { position: absolute; left: -16px; top: -4px; width: 28px; height: 28px; }
.ball {
  position: absolute; left: 1040px; top: -29px; width: 48px; height: 48px; border-radius: 50%; z-index: 3;
  background: #3fc264; border: 2px solid #ddd; box-shadow: inset 0 0 0 1px #1e8c44, 0 2px 6px #999;
  color: #fff; font-weight: 700; line-height: 12px; text-align: center; padding-top: 29px;
}

/* menu and toolbars */
.band { background: linear-gradient(#fcfcfc, #f0f0f0); border-radius: 3px; display: flex; align-items: center; }
.menurow, .toolrow { flex: none; display: flex; gap: 2px; height: 30px; padding-bottom: 1px; }
.menu { flex: 1; display: flex; align-items: center; gap: 11px; padding-left: 7px; min-width: 0; }
.menu .tb { margin-left: 3px; }
.menu .near { margin-left: -1px; }
.tb { gap: 4px; }
.arr { width: 12px; display: flex; justify-content: center; }
.arr::after { content: ""; border: 3px solid transparent; border-top-color: currentColor; border-bottom: 0; }
.tb .arr { margin-left: -4px; }
.tb.off { color: #7c7c7c; }
.sep { width: 1px; height: 16px; background: #b5b5b5; margin-right: -2px; }
.more { margin-left: auto; align-self: flex-start; font-weight: 700; font-size: 14px; line-height: 14px; padding-right: 4px; }
.tip { width: 187px; padding-left: 28px; }
.tip a { color: #5a2d00; text-decoration: none; white-space: nowrap; }
.account { width: 240px; padding-left: 4px; gap: 9px; }
.files { width: 150px; margin-left: 2px; padding-left: 2px; gap: 7px; }
.files .sep { height: 24px; }
.draw { flex: 1; padding-left: 3px; gap: 7px; }
.view { width: 663px; padding-left: 2px; gap: 7px; }
.sigma { width: 16px; text-align: center; font-size: 15px; font-weight: 700; }
.viewsel { position: relative; width: 62px; margin-right: -3px; }
.viewsel select, .barsel select {
  appearance: none; width: 100%; height: 23px; border: 1px solid #7a7a7a; background: #f0f0f0; color: #777; padding: 0 0 0 20px;
}
.viewsel::before { content: ""; position: absolute; left: 4px; top: 7px; width: 14px; height: 10px; background: #ddd; border: 1px solid #bbb; }
.viewsel::after, .barsel::after {
  content: ""; position: absolute; right: 4px; top: 10px; border: 3px solid transparent; border-top-color: #666; border-bottom: 0;
}

/* work area */
.work { position: relative; flex: 1; min-height: 0; display: flex; gap: 6px; }
.nav { width: 226px; flex: none; display: flex; flex-direction: column; padding: 1px 0 3px; border-right: 1px solid #999; }
.navhead { height: 15px; border: 1px solid #888; display: flex; align-items: center; justify-content: space-between; flex: none; }
.navhead svg { width: 28px; height: 12px; margin-right: 3px; }
.navbtn { flex: none; height: 22px; justify-content: center; border: 1px solid #a0a0a0; border-width: 1px 1px 0; background: #f0f0f0; }
.navhead + .navbtn { margin-top: 1px; }
.navbtn:last-child { border-bottom-width: 1px; height: 23px; }
.expand { flex: none; height: 28px; border-top: 1px solid #a0a0a0; background: linear-gradient(#fcfcfc, #f0f0f0); padding: 7px; }
.expand svg { width: 40px; height: 16px; }
.treebox { flex: 1; min-height: 0; display: flex; border: 1px solid #828790; margin: 0 0 1px 2px; padding: 1px 2px 0 0; background: #fff; overflow: hidden; }
.tree { flex: 1; overflow: hidden; }
.node { display: flex; align-items: center; height: 16px; padding-left: 3px; }
.node .ic + .ic { margin: 0 4px; }
.tree ul {
  margin-left: 12px; padding-left: 19px;
  background: repeating-linear-gradient(#888 0 1px, transparent 1px 2px) left top / 1px 100% no-repeat;
}
.tree ul li, .cmptree li {
  display: flex; align-items: center; gap: 5px; height: 16px; padding-left: 11px; white-space: nowrap;
  background: repeating-linear-gradient(#888 0 1px, transparent 1px 2px) left top / 1px 100% no-repeat,
    repeating-linear-gradient(90deg, #888 0 1px, transparent 1px 2px) left 8px / 10px 1px no-repeat;
}
.tree ul li:last-child, .cmptree li:last-child { background-size: 1px 8px, 10px 1px; }
.cur { display: flex; gap: 5px; background: #d9d9d9; padding-right: 5px; }
.tree tt { vertical-align: top; }
.sbar { width: 16px; background: #f0f0f0; display: flex; flex-direction: column; }
.sbar .gap { flex: 72; }
.sbar .thumb { flex: 276; background: #cdcdcd; }
.sbar .rest { flex: 100; }
.flip { transform: rotate(180deg); }

.right { flex: 1; min-width: 0; display: flex; flex-direction: column; padding-bottom: 3px; }
.cmpbar { flex: none; height: 29px; padding-left: 4px; gap: 6px; }
.cols { flex: 1; min-height: 0; display: flex; gap: 4px; }
.cmp { width: 184px; flex: none; display: flex; flex-direction: column; border-right: 1px solid #a0a0a0; }
.find { display: flex; gap: 2px; padding: 5px 1px 2px; }
.find input { flex: 1; min-width: 0; height: 23px; border: 1px solid #7a7a7a; padding: 0 2px; }
.find input::placeholder { color: #777; }
.find button { width: 23px; background: #fff; justify-content: center; }
.cmptree { flex: 1; background: #fff; border: 1px solid #828790; padding: 1px 0 0 0; }
.cmptree ul { padding-left: 32px; }
.cmptree li { padding-left: 8px; background-size: 1px 100%, 8px 1px; }
.cmptree li span { display: flex; align-items: center; gap: 7px; height: 16px; padding: 0 4px; }
.cmptree .sel { background: #316ac5; }
.gear { width: 12px; height: 12px; }

.props { flex: 1; min-width: 0; display: flex; flex-direction: column; background: #fff; border-left: 1px solid #ddd; margin-right: 3px; }
.proptab { height: 20px; padding: 2px 6px 0; }
.propbody { flex: 1; min-height: 0; margin: 4px 0 0 3px; border: 1px solid #a0a0a0; display: flex; justify-content: space-between; padding-right: 4px; }
.propbody table { border-collapse: collapse; width: 21px; align-self: flex-start; font: 11px "Liberation Sans", sans-serif; }
.propbody th, .propbody td { padding: 0; height: 19px; line-height: 18px; text-align: center; border: solid #b8b8b8; border-width: 0 1px 1px; background: linear-gradient(#fff, #efefef); }
.propbody th { height: 24px; }
.propbody .on td { background: #ffd28c; color: #5a0050; }
.big .thumb { flex: 310; }
.big .rest { flex: 221; }

/* section editor window */
.dialog {
  position: absolute; left: 447px; right: 22px; top: 0; bottom: 5px; display: flex; flex-direction: column;
  background: linear-gradient(#98b2d0, #b9cfe8 29px); border: 1px solid #333; border-top: 0;
  box-shadow: inset -1px -1px #4fc6ee; padding: 0 7px 8px;
}
.dialog h2 { margin: 0; font-size: 12px; font-weight: 400; height: 29px; line-height: 36px; }
.dbody { flex: 1; min-height: 0; background: #f0f0f0; display: flex; flex-direction: column; }
.tabs { display: flex; align-items: flex-end; height: 20px; padding-left: 2px; }
.tabs button { width: 47px; height: 18px; padding: 0 5px; border: 1px solid #d9d9d9; border-bottom: 0; }
.tabs .act { width: 51px; height: 21px; background: #fff; margin-bottom: -1px; padding: 0 6px; z-index: 1; }
.page { flex: 1; min-height: 0; display: flex; flex-direction: column; border: 1px solid #d9d9d9; background: #fff; margin: 0 3px 4px 1px; padding: 3px 1px 2px 3px; }
.strip { display: flex; align-items: center; height: 27px; background: linear-gradient(#fcfcfc, #f2f2f2); padding-left: 2px; }
.strip.second { height: 30px; background: #f0f0f0; }
.grip { width: 2px; height: 14px; margin-right: 3px; background: repeating-linear-gradient(#b5b5b5 0 2px, transparent 2px 4px); }
.strip button { height: 23px; padding: 0 4px; border: 1px solid transparent; }
.strip .sep { margin: 0 2px 0 3px; }
.strip .on { background: #dcebf8; border-color: #0078d7; }
.strip label { color: #777; padding: 0 2px 0 4px; }
.barsel { position: relative; width: 133px; }
.barsel select { padding: 0 1px; }
.canvas { flex: 1; min-height: 0; border: 2px solid #f00; background: #000; overflow: hidden; }
.canvas svg { width: 100%; height: 100%; }
.rebar, .dim { shape-rendering: crispEdges; }
.cad { font: 10px "DejaVu Sans Mono", monospace; }
.cad .zh { font: 12px "Noto Sans CJK SC", sans-serif; }
.dstatus { flex: none; height: 20px; display: flex; gap: 3px; border: 1px solid #ddd; background: linear-gradient(#fff, #f0f0f0); }
.xy { width: 147px; padding: 1px 0 0 7px; border-right: 1px solid #ddd; }
.msg { flex: 1; padding-top: 2px; }
.dstatus svg { width: 12px; height: 12px; align-self: flex-end; }

/* status line */
.status { flex: none; height: 20px; display: flex; gap: 3px; background: #f0f0f0; }
.status span { border: 1px solid #ccc; background: linear-gradient(#fff, #f0f0f0); padding: 1px; white-space: nowrap; overflow: hidden; }
.status .s1 { width: 147px; flex: none; }
.status .s2 { width: 77px; flex: none; }
.status .s3 { width: 97px; flex: none; }
.status .s4 { width: 47px; flex: none; }
.status .s5 { flex: 1; }
.status .s6 { width: 70px; flex: none; }

/* taskbar */
.taskbar { flex: none; height: 40px; background: #000b10; display: flex; color: #fff; }
.start { width: 48px; background: #000; justify-content: center; }
.start svg { width: 16px; height: 16px; }
.cortana { width: 344px; background: #333; display: flex; align-items: center; padding: 0 14px 0 9px; gap: 5px; }
.cortana .o { width: 22px; height: 22px; }
.cortana .m { width: 12px; height: 18px; }
.cortana input { flex: 1; min-width: 0; border: 0; padding: 0; background: none; font-size: 14px; color: #fff; }
.cortana input::placeholder { color: #999; }
.quick, .apps { display: flex; }
.quick { margin-right: 6px; }
.quick button { width: 50px; justify-content: center; }
.apps button { width: 48px; justify-content: center; background: linear-gradient(#76b9ed, #76b9ed) center bottom / 0 2px no-repeat; }
.apps .run { background-size: 40px 2px; }
.apps .cur { background-color: #333c40; background-size: 48px 2px; }
.quick svg, .apps svg { width: 24px; height: 24px; }
.quick svg { width: 22px; height: 22px; }
.tray { flex: 1; display: flex; align-items: center; gap: 7px; padding-right: 16px; }
.t16 { width: 16px; height: 16px; }
.t24 { width: 24px; height: 16px; }
.link { margin: 0 11px 0 15px; }
.cpu { margin-right: 11px; white-space: nowrap; }
.cpu, .clock { line-height: 18px; text-align: center; }
.ying { font-size: 14px; margin: 0 5px; }
.clock { margin: 0 auto 0 12px; }
.note { position: relative; }
.note svg { width: 28px; height: 28px; }
.note b { position: absolute; left: 15px; top: 10px; font-weight: 400; }
```
